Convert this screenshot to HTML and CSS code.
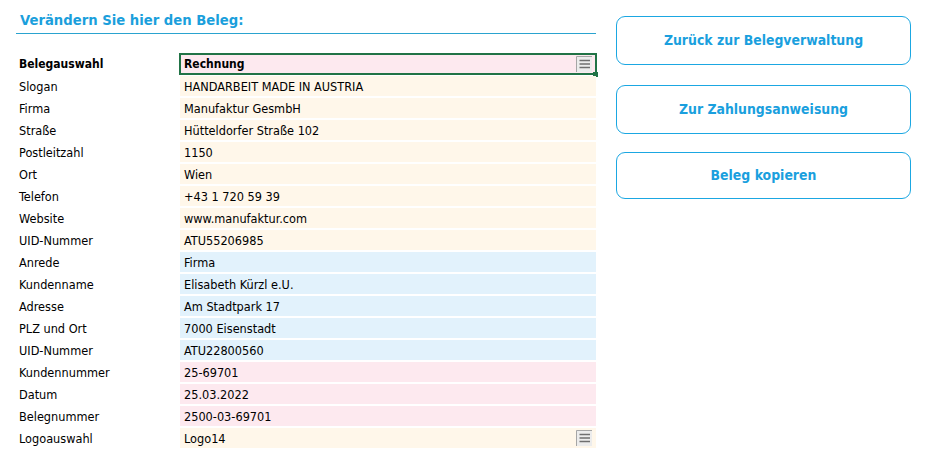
FILE: index.html
```html
<!DOCTYPE html>
<html lang="de">
<head>
<meta charset="utf-8">
<title>Beleg</title>
<link rel="stylesheet" href="styles.css">
</head>
<body>
<div class="page">
  <div class="left">
    <div class="title">Verändern Sie hier den Beleg:</div>
    <div class="rows">
      <div class="label bold">Belegauswahl</div>
      <div class="cell pink selected bold">Rechnung
        <svg class="dd" viewBox="0 0 16 16" width="16" height="16"><rect x="0" y="0" width="16" height="16" fill="#ececec"/><path d="M0.5 16V0.5H16" fill="none" stroke="#a6a6a6" stroke-width="1"/><path d="M3.5 4.5H14M3.5 8H14M3.5 11.5H14" stroke="#6f6f6f" stroke-width="1.6"/></svg>
        <span class="handle"></span>
      </div>
      <div class="label">Slogan</div><div class="cell peach">HANDARBEIT MADE IN AUSTRIA</div>
      <div class="label">Firma</div><div class="cell peach">Manufaktur GesmbH</div>
      <div class="label">Straße</div><div class="cell peach">Hütteldorfer Straße 102</div>
      <div class="label">Postleitzahl</div><div class="cell peach">1150</div>
      <div class="label">Ort</div><div class="cell peach">Wien</div>
      <div class="label">Telefon</div><div class="cell peach">+43 1 720 59 39</div>
      <div class="label">Website</div><div class="cell peach">www.manufaktur.com</div>
      <div class="label">UID-Nummer</div><div class="cell peach">ATU55206985</div>
      <div class="label">Anrede</div><div class="cell blue">Firma</div>
      <div class="label">Kundenname</div><div class="cell blue">Elisabeth Kürzl e.U.</div>
      <div class="label">Adresse</div><div class="cell blue">Am Stadtpark 17</div>
      <div class="label">PLZ und Ort</div><div class="cell blue">7000 Eisenstadt</div>
      <div class="label">UID-Nummer</div><div class="cell blue">ATU22800560</div>
      <div class="label">Kundennummer</div><div class="cell pink">25-69701</div>
      <div class="label">Datum</div><div class="cell pink">25.03.2022</div>
      <div class="label">Belegnummer</div><div class="cell pink">2500-03-69701</div>
      <div class="label">Logoauswahl</div>
      <div class="cell peach">Logo14
        <svg class="dd dd2" viewBox="0 0 16 16" width="16" height="16"><rect x="0" y="0" width="16" height="16" fill="#ececec"/><path d="M0.5 16V0.5H16" fill="none" stroke="#a6a6a6" stroke-width="1"/><path d="M3.5 4.5H14M3.5 8H14M3.5 11.5H14" stroke="#6f6f6f" stroke-width="1.6"/></svg>
      </div>
    </div>
  </div>
  <div class="right">
    <div class="btn b1">Zurück zur Belegverwaltung</div>
    <div class="btn b2">Zur Zahlungsanweisung</div>
    <div class="btn b3">Beleg kopieren</div>
  </div>
</div>
</body>
</html>
```
FILE: styles.css
```css
html, body {
  margin: 0;
  padding: 0;
  background: #ffffff;
}
body {
  font-family: "DejaVu Sans Condensed", "DejaVu Sans", sans-serif;
  color: #000000;
}
.page {
  display: flex;
  align-items: flex-start;
}
.left {
  width: 580px;
  margin-left: 16px;
}
.title {
  color: #1b9fdc;
  font-weight: bold;
  font-size: 14.7px;
  height: 34px;
  line-height: 20px;
  padding-top: 10px;
  box-sizing: border-box;
  padding-left: 4px;
  border-bottom: 1px solid #2aa3cf;
}
.rows {
  margin-top: 20px;
  display: grid;
  grid-template-columns: 164px 416px;
  grid-auto-rows: 20px;
  row-gap: 2px;
  font-size: 12.6px;
  line-height: 19px;
}
.label {
  padding-left: 3px;
  padding-top: 1px;
  white-space: nowrap;
}
.bold {
  font-weight: bold;
  font-size: 12px;
}
.cell {
  position: relative;
  padding-left: 4px;
  padding-top: 1px;
  white-space: nowrap;
}
.peach { background: #fff7ea; }
.pink { background: #fde9ef; }
.blue { background: #e2f2fc; }
.selected {
  outline: 2px solid #217346;
  outline-offset: -1px;
}
.dd {
  position: absolute;
  right: 4px;
  top: 2px;
}
.handle {
  position: absolute;
  right: -2px;
  bottom: -3px;
  width: 5px;
  height: 5px;
  background: #217346;
}
.right {
  margin-left: 20px;
  width: 295px;
  display: flex;
  flex-direction: column;
  padding-top: 16px;
}
.btn {
  box-sizing: border-box;
  border: 1px solid #1ba7e2;
  border-radius: 9px;
  color: #1a9fde;
  font-weight: bold;
  font-size: 13.9px;
  display: flex;
  align-items: center;
  justify-content: center;
  padding-bottom: 2px;
}
.b1 { height: 49px; }
.b2 { height: 49px; margin-top: 20px; }
.b3 { height: 47px; margin-top: 18px; }
```
